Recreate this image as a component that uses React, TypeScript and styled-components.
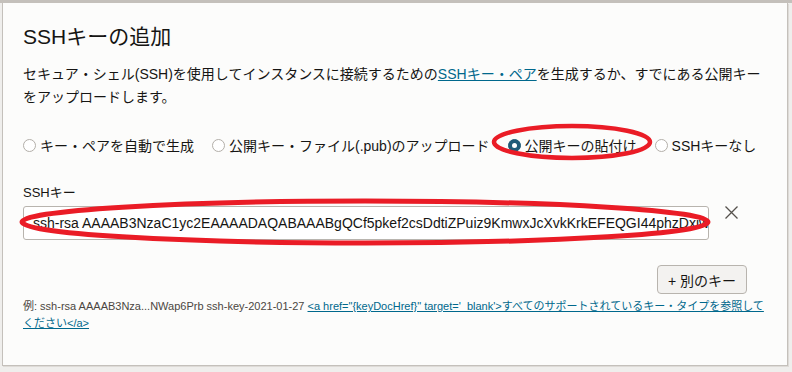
import React from "react";
import styled, { createGlobalStyle } from "styled-components";

const Global = createGlobalStyle`
  html, body { margin: 0; padding: 0; background: #efeeec; }
  body { font-family: "Liberation Sans", "Noto Sans CJK JP", sans-serif; color: #161513; }
  * { box-sizing: border-box; }
`;

const Page = styled.div`
  position: relative;
  width: 792px;
  height: 372px;
  border-top: 3px solid #c4c0bb;
  padding: 0 4px 6px 2px;
`;

const Panel = styled.section`
  height: 100%;
  background: #fcfcfb;
  border: 1px solid #c4c0bb;
  border-top: none;
  box-shadow: 1px 1px 0 #dedbd7;
  padding: 20px 17px 0 20px;
`;

const Title = styled.h2`
  margin: 0;
  font-size: 21px;
  line-height: 28px;
  font-weight: 400;
`;

const Description = styled.p`
  margin: 12px 0 0;
  font-size: 14px;
  line-height: 23px;
`;

const Link = styled.a`
  color: #00688c;
  text-decoration: underline;
`;

const RadioGroup = styled.div`
  display: flex;
  align-items: center;
  gap: 18px;
  margin-top: 26px;
  height: 20px;
`;

const RadioItem = styled.label`
  display: flex;
  align-items: center;
  gap: 4px;
  font-size: 14px;
  white-space: nowrap;
`;

const RadioCircle = styled.span<{ $checked?: boolean }>`
  width: 13px;
  height: 13px;
  border-radius: 50%;
  border: 1px solid ${(p) => (p.$checked ? "#1f5b78" : "#b3afa9")};
  background: ${(p) => (p.$checked ? "#1f5b78" : "#ffffff")};
  display: flex;
  align-items: center;
  justify-content: center;
  &::after {
    content: "";
    width: 5px;
    height: 5px;
    border-radius: 50%;
    background: #ffffff;
    display: ${(p) => (p.$checked ? "block" : "none")};
  }
`;

const FieldLabel = styled.div`
  margin-top: 29px;
  font-size: 13px;
  line-height: 18px;
`;

const KeysBlock = styled.div`
  width: 724px;
  margin-top: 4px;
`;

const KeyRow = styled.div`
  display: flex;
  align-items: flex-start;
`;

const KeyInput = styled.div`
  flex: 1;
  height: 34px;
  background: #ffffff;
  border: 1px solid #b8b4ae;
  border-radius: 3px;
  padding: 0 9px;
  font-size: 14px;
  line-height: 32px;
  white-space: nowrap;
  overflow: hidden;
`;

const RemoveButton = styled.span`
  width: 38px;
  padding-left: 16px;
  height: 13px;
  display: flex;
  align-items: center;
`;

const ButtonRow = styled.div`
  display: flex;
  justify-content: flex-end;
  margin-top: 25px;
`;

const AddButton = styled.button`
  width: 90px;
  height: 29px;
  background: #f3f2f0;
  border: 1px solid #b8b4ae;
  border-radius: 4px;
  font-family: "Liberation Sans", "Noto Sans CJK JP", sans-serif;
  font-size: 14px;
  color: #161513;
  padding: 0;
`;

const Help = styled.p`
  margin: 4px 0 0;
  font-size: 11px;
  line-height: 17px;
  color: #4b4641;
`;

const Overlay = styled.svg`
  position: absolute;
  left: 0;
  top: -3px;
  pointer-events: none;
`;

export default function App() {
  return (
    <>
      <Global />
      <Page>
        <Panel>
          <Title>SSHキーの追加</Title>
          <Description>
            セキュア・シェル(SSH)を使用してインスタンスに接続するための
            <Link>SSHキー・ペア</Link>
            を生成するか、すでにある公開キーをアップロードします。
          </Description>
          <RadioGroup>
            <RadioItem>
              <RadioCircle />
              キー・ペアを自動で生成
            </RadioItem>
            <RadioItem>
              <RadioCircle />
              公開キー・ファイル(.pub)のアップロード
            </RadioItem>
            <RadioItem>
              <RadioCircle $checked />
              公開キーの貼付け
            </RadioItem>
            <RadioItem>
              <RadioCircle />
              SSHキーなし
            </RadioItem>
          </RadioGroup>
          <FieldLabel>SSHキー</FieldLabel>
          <KeysBlock>
            <KeyRow>
              <KeyInput>
                ssh-rsa AAAAB3NzaC1yc2EAAAADAQABAAABgQCf5pkef2csDdtiZPuiz9KmwxJcXvkKrkEFEQGI44phzDxiwXr8yQm2pLs
              </KeyInput>
              <RemoveButton>
                <svg width="13" height="13" viewBox="0 0 13 13">
                  <path d="M0.5 0.5 L12.5 12.5 M12.5 0.5 L0.5 12.5" stroke="#55514c" strokeWidth="1.3" fill="none" />
                </svg>
              </RemoveButton>
            </KeyRow>
            <ButtonRow>
              <AddButton>+ 別のキー</AddButton>
            </ButtonRow>
          </KeysBlock>
          <Help>
            例: ssh-rsa AAAAB3Nza...NWap6Prb ssh-key-2021-01-27{" "}
            <Link>
              {"<a href=\"{keyDocHref}\" target='_blank'>すべてのサポートされているキー・タイプを参照してください</a>"}
            </Link>
          </Help>
        </Panel>
        <Overlay width="792" height="372" viewBox="0 0 792 372">
          <ellipse cx="572" cy="142" rx="78" ry="16" fill="none" stroke="#ea1c26" strokeWidth="4.5" />
          <ellipse cx="365" cy="222" rx="343" ry="21" fill="none" stroke="#ea1c26" strokeWidth="5" />
        </Overlay>
      </Page>
    </>
  );
}
